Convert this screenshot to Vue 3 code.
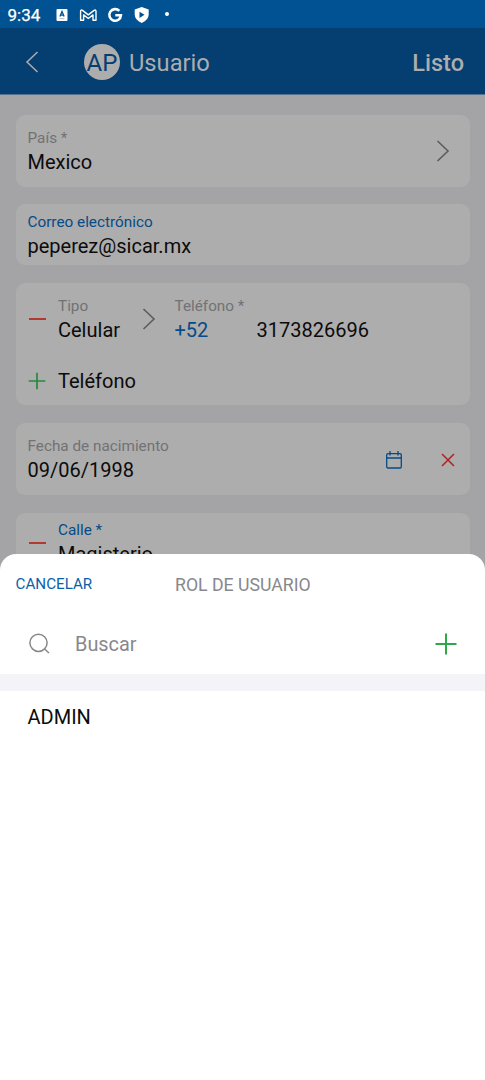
<script setup>
const countryCode = '+52'
const phone = '3173826696'
</script>

<template>
  <div class="screen">
    <div class="statusbar">
      <span class="clock">9:34</span>
      <svg class="status-icons" width="100" height="18" viewBox="0 0 100 18">
        <rect x="0.5" y="3" width="11" height="12" rx="1" fill="#fff" />
        <path d="M3.900 10.500 6 5.500l2.100 5M4.700 9.200h2.600" fill="none" stroke="#005293" stroke-width="1.300" />
        <path d="M3.500 12.700h5" fill="none" stroke="#8fb3d0" stroke-width="0.800" />
        <path d="M24.600 14.200V5.300q0-2 1.900-.9l5.800 4.500 5.800-4.500q1.900-1.100 1.900.9v8.900h-3V8.900l-4.700 3.600-4.700-3.600v5.300z" fill="none" stroke="#fff" stroke-width="1.400" stroke-linejoin="round" />
        <path d="M63.300 4.900A5.800 5.800 0 1 0 64.900 9.300H59.300" fill="none" stroke="#fff" stroke-width="2.600" />
        <path d="M85.700 1 92.700 3.500V8.500Q92.700 14 85.700 17 78.700 14 78.700 8.500V3.500z" fill="#fff" />
        <path d="M83.500 5.700v6.200l5-3.100z" fill="#005293" />
      </svg>
      <span class="dot"></span>
    </div>

    <header class="appbar">
      <svg class="back" width="14" height="22" viewBox="0 0 14 22"><path d="M12.500 1 2 11l10.500 10" /></svg>
      <span class="avatar">AP</span>
      <span class="title">Usuario</span>
      <span class="done">Listo</span>
    </header>

    <main class="form">
      <section class="card country">
        <div class="field">
          <span class="label">País *</span>
          <span class="value">Mexico</span>
        </div>
        <svg class="chevron" width="14" height="22" viewBox="0 0 14 22"><path d="M1.500 1 12 11 1.500 21" /></svg>
      </section>

      <section class="card email">
        <div class="field">
          <span class="label accent">Correo electrónico</span>
          <span class="value">peperez@sicar.mx</span>
        </div>
      </section>

      <section class="card phones">
        <div class="phone-row">
          <span class="minus"></span>
          <div class="field">
            <span class="label">Tipo</span>
            <span class="value">Celular</span>
          </div>
          <svg class="chevron" width="14" height="22" viewBox="0 0 14 22"><path d="M1.500 1 12 11 1.500 21" /></svg>
          <div class="field">
            <span class="label">Teléfono *</span>
            <span class="value number"><b>{{ countryCode }}</b><span>{{ phone }}</span></span>
          </div>
        </div>
        <div class="add-row">
          <svg class="plus" width="18" height="18" viewBox="0 0 18 18"><path d="M9 .7v16.600M.7 9h16.600" /></svg>
          <span class="value">Teléfono</span>
        </div>
      </section>

      <section class="card birth">
        <div class="field">
          <span class="label">Fecha de nacimiento</span>
          <span class="value">09/06/1998</span>
        </div>
        <svg class="calendar" width="18" height="20" viewBox="0 0 18 20">
          <rect x="1.700" y="3.700" width="14.600" height="14.300" rx="1.200" />
          <path d="M1.700 8h14.600M5 1v4.500M13 1v4.500" />
        </svg>
        <svg class="clear" width="14" height="14" viewBox="0 0 14 14"><path d="m1 1 12 12M13 1 1 13" /></svg>
      </section>

      <section class="card address">
        <span class="minus"></span>
        <div class="field">
          <span class="label accent">Calle *</span>
          <span class="value">Magisterio</span>
        </div>
      </section>
    </main>

    <div class="sheet">
      <div class="sheet-head">
        <span class="cancel">CANCELAR</span>
        <span class="sheet-title">ROL DE USUARIO</span>
      </div>
      <div class="search">
        <svg class="lens" width="22" height="22" viewBox="0 0 22 22"><circle cx="9.500" cy="9.800" r="8.600" /><path d="m15.300 15.800 4.700 4.200" /></svg>
        <span class="placeholder">Buscar</span>
        <svg class="plus big" width="22" height="22" viewBox="0 0 22 22"><path d="M11 .5v21M.5 11h21" /></svg>
      </div>
      <div class="band"></div>
      <div class="option">ADMIN</div>
    </div>
  </div>
</template>

<style>
body { margin: 0; }
</style>

<style scoped>
.screen {
  position: relative;
  width: 485px;
  height: 1080px;
  overflow: hidden;
  background: #a4a4a6;
  font-family: Roboto, "Liberation Sans", sans-serif;
  color: #0b0b0b;
}
svg { display: block; flex: none; }
.statusbar {
  display: flex;
  align-items: center;
  height: 28px;
  padding-left: 7.500px;
  background: #005293;
  color: #fff;
}
.clock { width: 48px; padding-top: 2px; font-size: 17px; font-weight: 400; line-height: 20px; white-space: nowrap; -webkit-text-stroke: 0.250px #fff; }
.status-icons { margin-top: 1px; }
.dot { width: 4px; height: 4px; margin-left: 9px; border-radius: 50%; background: #fff; }
.appbar {
  display: flex;
  align-items: center;
  box-sizing: border-box;
  height: 67px;
  padding: 1px 21px 0 25px;
  background: #053e71;
  border-bottom: 1px solid #55708d;
  color: #adadad;
}
.back { fill: none; stroke: #adadad; stroke-width: 1.500; }
.avatar {
  width: 36px;
  height: 36px;
  margin-left: 45px;
  border-radius: 50%;
  background: #adadad;
  color: #053e71;
  font-size: 24px;
  line-height: 38px;
  text-align: center;
}
.title { margin-left: 9px; padding-top: 2px; font-size: 23.700px; line-height: 28px; }
.done { margin-left: auto; padding-top: 3px; font-size: 23.500px; font-weight: 500; line-height: 28px; }
.form { display: flex; flex-direction: column; gap: 18px; padding: 20px 15.500px 0 16px; }
.card { display: flex; box-sizing: border-box; border-radius: 9px; background: #adadad; padding: 13px 12px 0 11.500px; }
.field { display: flex; flex-direction: column; gap: 2px; }
.label { font-size: 15.300px; line-height: 20px; color: #727274; white-space: nowrap; }
.label.accent { color: #064b86; }
.value { font-size: 20px; line-height: 24px; white-space: nowrap; }
.chevron { fill: none; stroke: #5c5c5e; stroke-width: 1.600; }
.country { height: 72px; justify-content: space-between; padding-right: 20px; margin-bottom: -1px; }
.country .chevron { margin-top: 12px; }
.email { height: 61px; padding-top: 8px; }
.phones { flex-direction: column; height: 122px; }
.phone-row { display: flex; height: 46px; }
.minus { flex: none; width: 17px; height: 2px; margin: 22px 12.500px 0 1px; background: #b33832; }
.phone-row .field:nth-child(2) { width: 83.500px; }
.phone-row .chevron { margin: 12px 19px 0 0; }
.number b { display: inline-block; width: 82px; font-weight: 400; color: #064b86; }
.add-row { display: flex; align-items: center; gap: 12.500px; margin-top: 27px; }
.plus { fill: none; stroke: #28883f; stroke-width: 1.700; }
.add-row .plus { margin-top: -1px; }
.birth { height: 72px; }
.calendar { margin: 13.500px 0 0 auto; fill: none; stroke: #064b86; stroke-width: 1.300; }
.clear { margin: 16.500px 2.500px 0 38.500px; fill: none; stroke: #b3211d; stroke-width: 1.500; }
.address { height: 72px; padding-top: 7px; }
.sheet {
  position: absolute;
  left: 0;
  right: 0;
  top: 554px;
  bottom: 0;
  border-radius: 16px 16px 0 0;
  background: #fff;
}
.sheet-head { display: flex; align-items: center; height: 60px; padding-left: 15.500px; }
.cancel { width: 159.500px; margin-top: -1px; font-size: 15.200px; line-height: 20px; color: #0d5faa; }
.sheet-title { padding-top: 1px; font-size: 17.700px; line-height: 22px; color: #88888b; }
.search { display: flex; align-items: center; box-sizing: border-box; height: 60px; padding: 0 28.500px 0 29px; }
.lens { fill: none; stroke: #88888b; stroke-width: 1.500; }
.placeholder { margin-left: 24px; padding-top: 1px; font-size: 19.900px; line-height: 24px; color: #88888b; }
.plus.big { margin-left: auto; stroke: #2aa84a; stroke-width: 2; }
.band { height: 17px; background: #f3f3f8; }
.option { padding: 14px 27.500px; font-size: 20px; line-height: 24px; }
</style>
